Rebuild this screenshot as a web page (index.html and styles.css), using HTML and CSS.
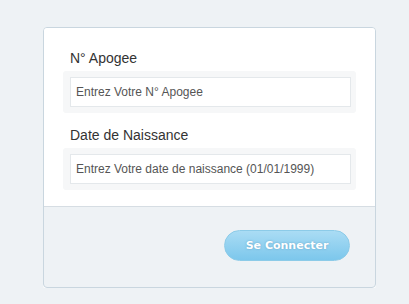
FILE: index.html
```html
<!DOCTYPE html>
<html lang="fr">
  <head>
    <meta charset="UTF-8" />
    <title>Connexion</title>
    <link rel="stylesheet" href="styles.css">
  </head>
  <body>
    <form class="login-box" method="POST" action="#">
      <div class="login-fields">
        <div class="field">
          <label for="apogee">N° Apogee</label>
          <div class="field-wrap">
            <input type="text" id="apogee" name="apogee" placeholder="Entrez Votre N° Apogee" />
          </div>
        </div>
        <div class="field">
          <label for="naissance">Date de Naissance</label>
          <div class="field-wrap">
            <input type="text" id="naissance" name="naissance" placeholder="Entrez Votre date de naissance (01/01/1999)" />
          </div>
        </div>
      </div>
      <div class="login-actions">
        <button type="submit" class="btn-connect">Se Connecter</button>
      </div>
    </form>
  </body>
</html>
```

FILE: styles.css
```css
body {
  margin: 0;
  background-color: #eef2f5;
  font-family: "Liberation Sans", Arial, sans-serif;
  color: #333;
}

.login-box {
  width: 333px;
  box-sizing: border-box;
  margin: 27px 0 0 43px;
  border: 1px solid #c9d6df;
  border-radius: 4px;
  background-color: #eef2f5;
  box-shadow: 0 1px 0 #ffffff;
  overflow: hidden;
}

.login-fields {
  background-color: #ffffff;
  padding: 22px 19px 16px 19px;
  border-bottom: 1px solid #d6dde3;
  display: flex;
  flex-direction: column;
  gap: 14px;
}

.field label {
  display: block;
  font-size: 14px;
  line-height: 16px;
  padding-left: 7px;
  margin-bottom: 5px;
  color: #333;
}

.field-wrap {
  background-color: #f6f7f8;
  border-radius: 3px;
  padding: 6px 5px 6px 7px;
}

.field-wrap input {
  display: block;
  width: 100%;
  box-sizing: border-box;
  height: 30px;
  margin: 0;
  border: 1px solid #e4e8eb;
  background-color: #ffffff;
  padding: 0 5px;
  font-family: "Liberation Sans", Arial, sans-serif;
  font-size: 12px;
  color: #555;
  outline: none;
}

.field-wrap input::placeholder {
  color: #555;
}

.login-actions {
  display: flex;
  justify-content: flex-end;
  padding: 23px 25px 26px;
}

.btn-connect {
  width: 126px;
  height: 31px;
  margin: 0;
  border: 1px solid #8ccbe8;
  border-radius: 16px;
  background: linear-gradient(to bottom, #aadcf4, #7cc7ec);
  color: #ffffff;
  font-family: "DejaVu Sans", Verdana, sans-serif;
  font-weight: bold;
  font-size: 11px;
  text-shadow: 0 0 2px rgba(60, 130, 170, 0.6);
  cursor: pointer;
}
```
